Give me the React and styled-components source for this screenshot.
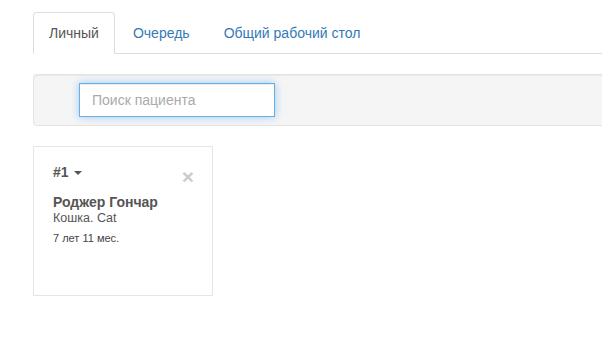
import React, { useState } from "react";
import styled, { createGlobalStyle } from "styled-components";

const GlobalStyle = createGlobalStyle`
    html, body {
        margin: 0;
        padding: 0;
        background: #fff;
        overflow: hidden;
    }
    body {
        font-family: "Liberation Sans", Arial, Helvetica, sans-serif;
        font-size: 14px;
        line-height: 1.42857;
        color: #333;
    }
    * { box-sizing: border-box; }
`;

const tabs = ["Личный", "Очередь", "Общий рабочий стол"];

const patients = [
    { id: 1, name: "Роджер Гончар", kind: "Кошка. Cat", age: "7 лет 11 мес." },
];

const App = () => {
    const [active, setActive] = useState(0);
    const [query, setQuery] = useState("");
    return (
        <>
            <GlobalStyle />
            <Page>
                <TabList>
                    {tabs.map((tab, index) => (
                        <TabItem key={tab}>
                            <TabLink active={index === active} onClick={() => setActive(index)}>
                                {tab}
                            </TabLink>
                        </TabItem>
                    ))}
                </TabList>

                <Well>
                    <SearchInput
                        autoFocus
                        value={query}
                        onChange={(e) => setQuery(e.target.value)}
                        placeholder="Поиск пациента"
                    />
                </Well>

                <CardRow>
                    {patients.map((patient) => (
                        <PatientCard key={patient.id}>
                            <CardHeader>
                                <Number>
                                    #{patient.id} <Caret />
                                </Number>
                                <CloseButton>×</CloseButton>
                            </CardHeader>
                            <Name>{patient.name}</Name>
                            <Kind>{patient.kind}</Kind>
                            <Age>{patient.age}</Age>
                        </PatientCard>
                    ))}
                </CardRow>
            </Page>
        </>
    );
};

export default App;

const Page = styled.div`
    padding: 12px 0 0 33px;
    margin-right: -6px;
`;

const TabList = styled.ul`
    display: flex;
    list-style: none;
    margin: 0;
    padding: 0;
    border-bottom: 1px solid #ddd;
`;

const TabItem = styled.li`
    margin-bottom: -1px;
`;

const TabLink = styled.a`
    display: block;
    padding: 10px 15px;
    margin-right: 2px;
    line-height: 20px;
    border: 1px solid ${(p) => (p.active ? "#ddd" : "transparent")};
    border-bottom-color: transparent;
    border-radius: 4px 4px 0 0;
    background: ${(p) => (p.active ? "#fff" : "transparent")};
    color: ${(p) => (p.active ? "#555" : "#337ab7")};
    cursor: pointer;
`;

const Well = styled.div`
    margin-top: 20px;
    padding: 8px 8px 8px 45px;
    background: #f5f5f5;
    border: 1px solid #e3e3e3;
    border-radius: 4px;
    box-shadow: inset 0 1px 1px rgba(0, 0, 0, 0.05);
`;

const SearchInput = styled.input`
    display: block;
    width: 196px;
    height: 34px;
    padding: 6px 12px;
    font-family: inherit;
    font-size: 14px;
    color: #555;
    background: #fff;
    border: 1px solid #66afe9;
    border-radius: 0;
    outline: 0;
    box-shadow: inset 0 1px 1px rgba(0, 0, 0, 0.075), 0 0 8px rgba(102, 175, 233, 0.6);
    &::placeholder {
        color: #aaa;
    }
`;

const CardRow = styled.div`
    display: flex;
    margin-top: 20px;
`;

const PatientCard = styled.div`
    width: 180px;
    height: 150px;
    padding: 16px 18px 0 19px;
    border: 1px solid #e5e5e5;
    color: #555;
`;

const CardHeader = styled.div`
    display: flex;
    justify-content: space-between;
    align-items: flex-start;
    height: 31px;
`;

const Number = styled.span`
    font-weight: bold;
    color: #555;
`;

const Caret = styled.span`
    display: inline-block;
    width: 0;
    height: 0;
    margin-left: 2px;
    vertical-align: middle;
    border-top: 4px solid #555;
    border-left: 4px solid transparent;
    border-right: 4px solid transparent;
`;

const CloseButton = styled.span`
    margin-top: 3px;
    font-size: 21px;
    font-weight: bold;
    line-height: 1;
    color: #000;
    opacity: 0.2;
    text-shadow: 0 1px 0 #fff;
    cursor: pointer;
`;

const Name = styled.div`
    font-weight: bold;
    font-size: 14px;
    line-height: 17px;
    color: #555;
`;

const Kind = styled.div`
    font-size: 12.5px;
    line-height: 15px;
    color: #555;
`;

const Age = styled.div`
    margin-top: 6px;
    font-size: 11px;
    line-height: 13px;
    color: #444;
`;
